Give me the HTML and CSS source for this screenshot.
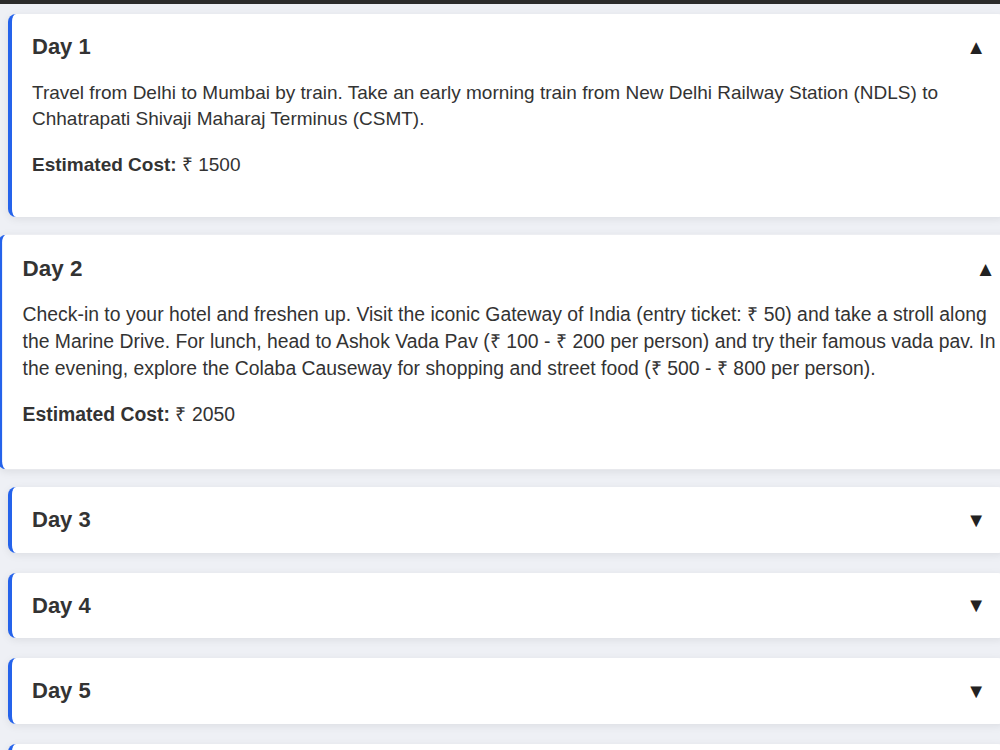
FILE: index.html
```html
<!DOCTYPE html>
<html lang="en">
<head>
  <meta charset="UTF-8">
  <meta name="viewport" content="width=device-width, initial-scale=1">
  <title>Delhi to Mumbai Itinerary</title>
  <link rel="stylesheet" href="styles.css">
</head>
<body>

<!-- top bar -->
<div class="topbar"></div>

<!-- day by day plan -->
<div class="itinerary">

  <div class="day open">
    <div class="day-header">
      <h3>Day 1</h3>
      <span class="toggle">▲</span>
    </div>
    <div class="day-body">
      <p>Travel from Delhi to Mumbai by train. Take an early morning train from New Delhi Railway Station (NDLS) to Chhatrapati Shivaji Maharaj Terminus (CSMT).</p>
      <p><strong>Estimated Cost:</strong> ₹ 1500</p>
    </div>
  </div>

  <div class="day open hover">
    <div class="day-header">
      <h3>Day 2</h3>
      <span class="toggle">▲</span>
    </div>
    <div class="day-body">
      <p>Check-in to your hotel and freshen up. Visit the iconic Gateway of India (entry ticket: ₹ 50) and take a stroll along the Marine Drive. For lunch, head to Ashok Vada Pav (₹ 100 - ₹ 200 per person) and try their famous vada pav. In the evening, explore the Colaba Causeway for shopping and street food (₹ 500 - ₹ 800 per person).</p>
      <p><strong>Estimated Cost:</strong> ₹ 2050</p>
    </div>
  </div>

  <div class="day">
    <div class="day-header">
      <h3>Day 3</h3>
      <span class="toggle">▼</span>
    </div>
  </div>

  <div class="day">
    <div class="day-header">
      <h3>Day 4</h3>
      <span class="toggle">▼</span>
    </div>
  </div>

  <div class="day">
    <div class="day-header">
      <h3>Day 5</h3>
      <span class="toggle">▼</span>
    </div>
  </div>

  <div class="day">
    <div class="day-header">
      <h3>Day 6</h3>
      <span class="toggle">▼</span>
    </div>
  </div>

</div>

</body>
</html>
```

FILE: styles.css
```css
body {
  margin: 0;
  background: #eef0f5;
  font-family: "Liberation Sans", Arial, sans-serif;
  color: #333;
  overflow: hidden;
}

.topbar {
  height: 4px;
  background: #2b2b2b;
}

.itinerary {
  width: 998px;
  margin: 10px 0 0 8px;
  display: flex;
  flex-direction: column;
  gap: 20px;
}

.day {
  background: #fff;
  border-left: 4px solid #2563eb;
  border-radius: 8px;
  box-shadow: 0 2px 8px rgba(0,0,0,0.08);
  transition: transform 0.2s ease;
}

.day.hover {
  transform: scale(1.02);
}

.day-header {
  display: flex;
  justify-content: space-between;
  align-items: center;
  padding: 20px;
  cursor: pointer;
}

.day-header h3 {
  margin: 0;
  font-size: 22px;
  line-height: 25.5px;
}

.toggle {
  font-size: 20px;
  line-height: 1;
  color: #222;
}

.day-body {
  padding: 0 20px 20px;
}

.day-body p {
  margin: 0 0 19px;
  font-size: 19px;
  line-height: 1.4;
}
```
